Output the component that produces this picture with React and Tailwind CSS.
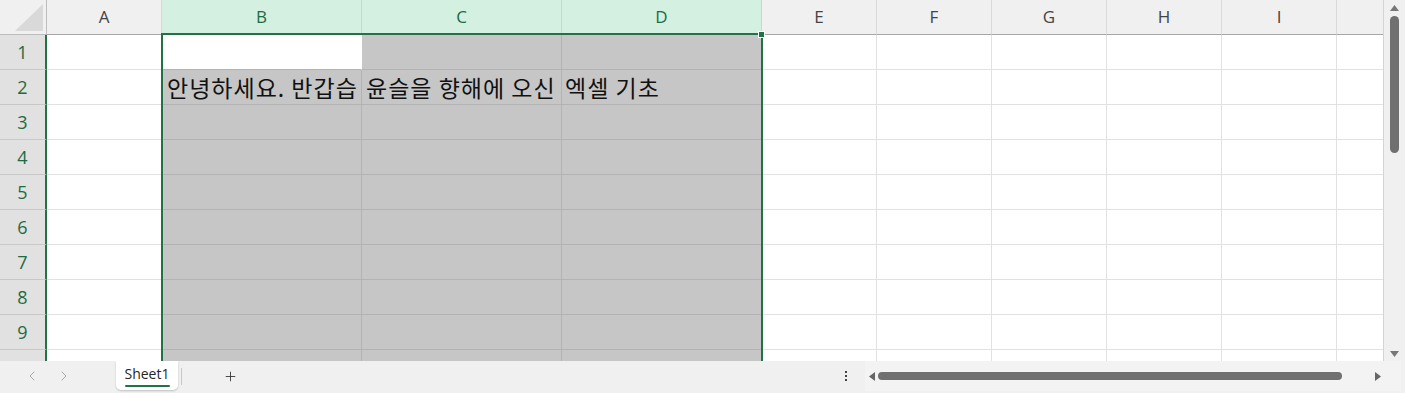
import React from "react";
import { ChevronLeft, ChevronRight, Plus } from "lucide-react";

const columns = [
  { label: "A", width: 115 },
  { label: "B", width: 200, selected: true },
  { label: "C", width: 200, selected: true },
  { label: "D", width: 200, selected: true },
  { label: "E", width: 115 },
  { label: "F", width: 115 },
  { label: "G", width: 115 },
  { label: "H", width: 115 },
  { label: "I", width: 115 },
  { label: "J", width: 115 },
];

const rows = [1, 2, 3, 4, 5, 6, 7, 8, 9, 10];

// visible part of the cell text (the rest is cut by the next filled cell)
const cellText = {
  B2: { text: "안녕하세요. 반갑습", pad: "pl-[5px]" },
  C2: { text: "윤슬을 향해에 오신", pad: "pl-[4px]" },
  D2: { text: "엑셀 기초", pad: "pl-[3px]" },
};

const Cell = ({ col, row }) => {
  const key = col.label + row;
  const active = key === "B1";
  const info = cellText[key];
  const shade = col.selected && !active;

  return (
    <div
      className={`flex min-w-0 items-end overflow-hidden whitespace-nowrap border-b border-r ${
        shade
          ? "bg-[#c6c6c6] border-[#b3b3b3]"
          : active
          ? "bg-white border-b-[#b3b3b3] border-r-transparent"
          : "bg-white border-[#e1e1e1]"
      }`}
    >
      {info && (
        <span
          className={`${info.pad} text-[23px] leading-[33px] tracking-[1px] text-[#111]`}
          style={{ fontFamily: '"Noto Sans CJK KR", "Noto Sans", sans-serif' }}
        >
          {info.text}
        </span>
      )}
    </div>
  );
};

const Sheet = () => (
  <div className="relative flex-1 overflow-hidden border-r border-[#d4d4d4]">
    <div
      className="grid grid-cols-[47px_115px_200px_200px_200px_115px_115px_115px_115px_115px_115px] auto-rows-[35px]"
      style={{ fontFamily: '"Open Sans", "Noto Sans", sans-serif' }}
    >
      {/* corner */}
      <div className="flex items-end justify-end border-r border-b border-[#bdbdbd] bg-[#f0f0f0] pr-[3px] pb-[3px]">
        <svg width="28" height="27" viewBox="0 0 28 27">
          <polygon points="28,0 28,27 0,27" fill="#d9d9d9" />
        </svg>
      </div>
      {columns.map((col) => (
        <div
          key={col.label}
          className={`flex items-center justify-center text-[17px] ${
            col.selected
              ? "bg-[#d3f0e0] text-[#1e6b41] border-r border-r-[#c1dccd] border-b-2 border-b-[#217346]"
              : "bg-[#f0f0f0] text-[#444] border-r border-r-[#d9d9d9] border-b border-b-[#a6a6a6]"
          }`}
        >
          {col.label}
        </div>
      ))}
      {rows.map((row) => (
        <React.Fragment key={row}>
          <div className="flex items-center justify-center border-b border-[#c8c8c8] border-r-2 border-r-[#217346] bg-[#e1e1e1] text-[18px] text-[#1e6b41]">
            {row}
          </div>
          {columns.map((col) => (
            <Cell key={col.label} col={col} row={row} />
          ))}
        </React.Fragment>
      ))}
    </div>

    {/* selection outline over columns B:D */}
    <div className="pointer-events-none absolute left-[161px] top-[33px] h-[400px] w-[602px] border-2 border-[#217346]" />
    <div className="pointer-events-none absolute left-[758px] top-[31px] h-[7px] w-[7px] border border-white bg-[#217346]" />
  </div>
);

const VerticalScroll = () => (
  <div className="flex w-[21px] flex-col items-center bg-[#f0f0f0] pt-[5px] pb-[3px]">
    <svg width="9" height="7" viewBox="0 0 9 7">
      <polygon points="4.5,0 9,6 0,6" fill="#777" />
    </svg>
    <div className="mt-[4px] h-[137px] w-[9px] rounded-full bg-[#707070]" />
    <div className="flex-1" />
    <svg width="9" height="7" viewBox="0 0 9 7">
      <polygon points="0,0 9,0 4.5,6" fill="#777" />
    </svg>
  </div>
);

const TabBar = () => (
  <div
    className="flex h-[32px] items-start bg-[#f0f0f0]"
    style={{ fontFamily: '"Open Sans", "Noto Sans", sans-serif' }}
  >
    <div className="ml-[20px] flex h-[30px] w-[24px] items-center justify-center text-[#a8a8a8]">
      <ChevronLeft size={16} strokeWidth={1.5} />
    </div>
    <div className="ml-[8px] flex h-[30px] w-[24px] items-center justify-center text-[#a8a8a8]">
      <ChevronRight size={16} strokeWidth={1.5} />
    </div>
    <div className="ml-[40px] flex h-[29px] w-[62px] flex-col items-center justify-center rounded-b-[5px] bg-white shadow-[0_1px_2px_rgba(0,0,0,0.2)]">
      <span className="text-[14px] leading-[18px] text-[#262626]">Sheet1</span>
      <div className="mt-[2px] h-[2px] w-[45px] rounded-full bg-[#217346]" />
    </div>
    <div className="ml-[3px] mt-[7px] h-[17px] w-px bg-[#c8c8c8]" />
    <div className="ml-[40px] flex h-[30px] w-[16px] items-center justify-center text-[#333]">
      <Plus size={15} strokeWidth={1.4} />
    </div>
    <div className="flex-1" />
    <div className="flex h-[30px] w-[10px] flex-col items-center justify-center gap-[2px]">
      <div className="h-[2px] w-[2px] bg-[#444]" />
      <div className="h-[2px] w-[2px] bg-[#444]" />
      <div className="h-[2px] w-[2px] bg-[#444]" />
    </div>
    <div className="ml-[14px] flex h-[30px] w-[536px] items-center bg-[#f3f3f3]">
      <svg width="7" height="9" viewBox="0 0 7 9" className="ml-[4px]">
        <polygon points="0,4.5 6,0 6,9" fill="#666" />
      </svg>
      <div className="ml-[2px] h-[8px] w-[464px] rounded-full bg-[#707070]" />
      <div className="flex-1" />
      <svg width="7" height="9" viewBox="0 0 7 9" className="mr-[20px]">
        <polygon points="1,0 7,4.5 1,9" fill="#666" />
      </svg>
    </div>
    <div className="w-[4px]" />
  </div>
);

export default function App() {
  return (
    <div className="flex h-[393px] w-[1405px] flex-col overflow-hidden bg-white">
      <div className="flex h-[361px]">
        <Sheet />
        <VerticalScroll />
      </div>
      <TabBar />
    </div>
  );
}
